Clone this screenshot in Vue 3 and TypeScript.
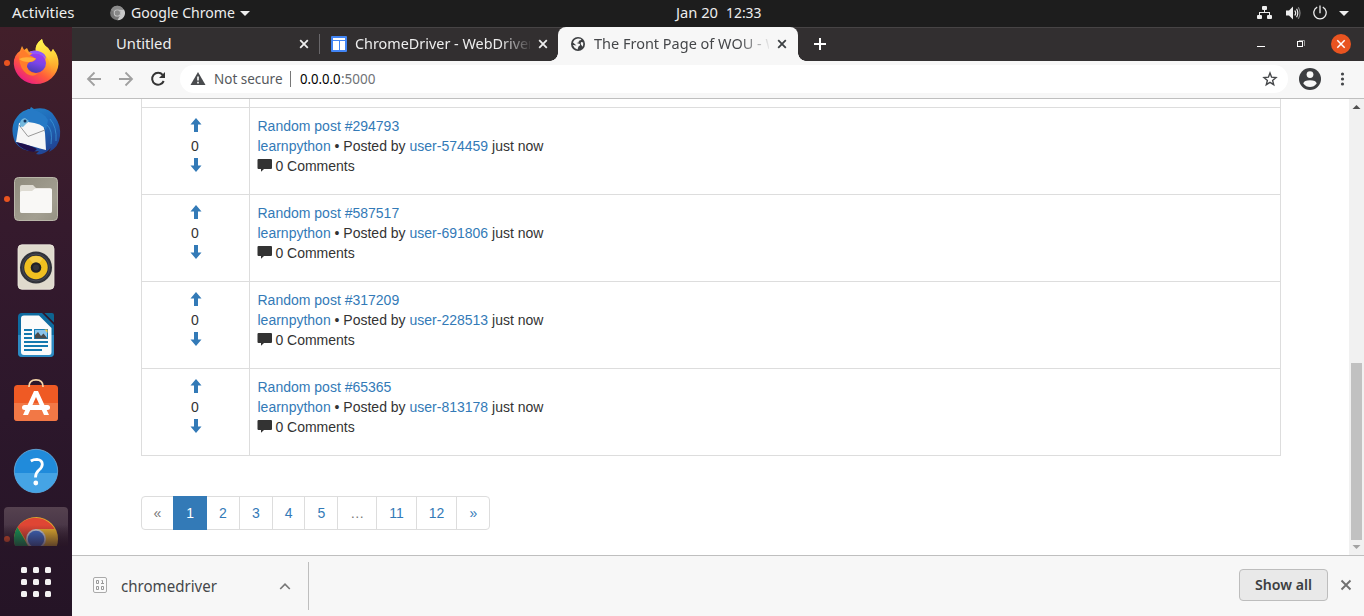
<script setup lang="ts">
import { h } from 'vue'

interface Post {
  title: string
  board: string
  author: string
}

interface LabelProps {
  text: string
  w: number
  h: number
  y: number
  size?: number
  color?: string
  weight?: number
}

// Single line of interface text, fitted to a fixed advance width.
const Label = (p: LabelProps) =>
  h('svg', { width: p.w + 1, height: p.h, style: { display: 'block', flex: 'none', overflow: 'visible' } }, [
    h(
      'text',
      {
        x: 0,
        y: p.y,
        textLength: p.w,
        lengthAdjust: 'spacingAndGlyphs',
        fill: p.color ?? '#eeeeee',
        'font-size': p.size ?? 14,
        'font-weight': p.weight ?? 400,
        'font-family': '"Noto Sans", "Open Sans", sans-serif',
        'xml:space': 'preserve',
      },
      p.text,
    ),
  ])
Label.props = ['text', 'w', 'h', 'y', 'size', 'color', 'weight']

const posts: Post[] = [
  { title: 'Random post #294793', board: 'learnpython', author: 'user-574459' },
  { title: 'Random post #587517', board: 'learnpython', author: 'user-691806' },
  { title: 'Random post #317209', board: 'learnpython', author: 'user-228513' },
  { title: 'Random post #65365', board: 'learnpython', author: 'user-813178' },
]

const pages = ['«', '1', '2', '3', '4', '5', '…', '11', '12', '»']
const gridDots = [0, 1, 2, 3, 4, 5, 6, 7, 8]
</script>

<template>
  <div class="screen">
    <header class="topbar">
      <Label class="activities" text="Activities" :w="62.5" :h="27" :y="18" />
      <svg class="app-icon" width="15" height="27" viewBox="0 0 15 27">
        <circle cx="7.3" cy="13" r="7.2" fill="#777" />
        <path d="M7.3 9.4H14A7.2 7.2 0 0 1 7.5 20.2L10.5 14.6A3.6 3.6 0 0 0 7.3 9.4Z" fill="#c9c9c9" />
        <path d="M1 9.7A7.2 7.2 0 0 1 13.6 9.4H7.3A3.7 3.7 0 0 0 3.8 12Z" fill="#8c8c8c" />
        <circle cx="7.3" cy="13" r="3.6" fill="#ccc" />
        <circle cx="7.3" cy="13" r="2.7" fill="#888" />
      </svg>
      <Label class="app-name" text="Google Chrome" :w="104" :h="27" :y="18" />
      <svg class="caret" width="10" height="27"><path d="M0 11H10L5 16Z" fill="#eee" /></svg>
      <div class="clock">
        <Label text="Jan 20" :w="42" :h="27" :y="18" />
        <Label text="12:33" :w="35.5" :h="27" :y="18" />
      </div>
      <div class="tray">
        <svg width="15" height="27" viewBox="0 0 15 27" fill="#eee">
          <rect x="5" y="6" width="5" height="4" rx="1" />
          <rect x="0" y="15" width="5" height="4" rx="1" />
          <rect x="10" y="15" width="5" height="4" rx="1" />
          <path d="M7 10H8V12H13V15H12V13H3V15H2V12H7Z" />
        </svg>
        <svg width="15" height="27" viewBox="0 0 15 27" fill="none" stroke="#eee" stroke-width="1.2">
          <path d="M0 10.5H3L7 6.5V19.5L3 15.5H0Z" fill="#eee" stroke="none" />
          <path d="M8.8 10.5Q10.6 13 8.8 15.5M10.6 8.7Q13 13 10.6 17.3" />
          <path d="M12.3 7.2Q15.7 13 12.3 18.8" stroke="#888" />
        </svg>
        <svg width="14" height="27" viewBox="0 0 14 27" fill="none" stroke="#eee" stroke-width="1.3">
          <path d="M7 5.5V13.2M4.2 7.2A6.2 6.2 0 1 0 9.8 7.2" />
        </svg>
        <svg width="10" height="27"><path d="M0 11H10L5 16Z" fill="#eee" /></svg>
      </div>
    </header>

    <div class="desktop">
      <nav class="dock">
        <svg class="slot" viewBox="0 0 72 68">
          <defs>
            <linearGradient id="ffBody" x1="0.85" y1="0.1" x2="0.25" y2="1">
              <stop offset="0" stop-color="#fff04a" />
              <stop offset="0.35" stop-color="#ffb02a" />
              <stop offset="0.65" stop-color="#ff5b3b" />
              <stop offset="1" stop-color="#e8168a" />
            </linearGradient>
            <linearGradient id="ffGlobe" x1="0.7" y1="0" x2="0.4" y2="1">
              <stop offset="0" stop-color="#a63af0" />
              <stop offset="0.5" stop-color="#7a45e8" />
              <stop offset="1" stop-color="#473bb0" />
            </linearGradient>
            <linearGradient id="ffTail" x1="0.4" y1="0" x2="0.6" y2="1">
              <stop offset="0" stop-color="#fff44f" />
              <stop offset="0.5" stop-color="#ffd23a" />
              <stop offset="1" stop-color="#ff8a2a" stop-opacity="0.2" />
            </linearGradient>
          </defs>
          <circle cx="7" cy="35" r="3" fill="#e95420" />
          <path d="M20 23L22 18L24 22L27 20L29 24Q33 22 36 23Q35 16 42 11Q43 17 48 20L51 24L53 21Q59 28 58.5 36A22.4 21.5 0 0 1 13.8 36Q13.5 27 20 23Z" fill="url(#ffBody)" />
          <path d="M35.5 23Q35 16 42 11Q43 17 48 20L51 25L53 21Q62 38 51 48Q52 33 44 26Z" fill="url(#ffTail)" />
          <circle cx="36" cy="35" r="10" fill="url(#ffGlobe)" />
          <path d="M19 30L22 20L29 27Q34 29 36 31Q34 34 30 34Q27 35 27 39Q29 46 38 45Q34 50 27 46Q20 41 19 30Z" fill="#ff7d2b" />
          <path d="M19 31Q24 28 36 30.5Q33 34 29 34Q22 34 19 31Z" fill="#ffb13a" />
          <path d="M29 24Q35 21 41 24Q46 26 46 31Q41 25 33 26Z" fill="#9059ff" />
        </svg>

        <svg class="slot" viewBox="0 0 72 68">
          <defs>
            <linearGradient id="tbBody" x1="0.2" y1="0" x2="0.8" y2="1">
              <stop offset="0" stop-color="#2484c8" />
              <stop offset="0.5" stop-color="#2068b8" />
              <stop offset="1" stop-color="#213e8e" />
            </linearGradient>
          </defs>
          <path d="M30 13L31 11L34 13Q49 10 55 21Q61 29 60 40Q59 51 49 56L51 52Q43 60 36 58L39 55Q22 57 15 46Q9 31 17 21Q22 14 30 13Z" fill="url(#tbBody)" />
          <path d="M16 46L19 27L28 24L43 28L45 37L46 54Q35 51 16 46Z" fill="#f6f6f6" />
          <path d="M19 29L28 40.5L45 34" fill="none" stroke="#999" stroke-width="1" />
          <path d="M16 46Q30 49 37 53L34 56Q21 54 16 46Z" fill="#20104c" />
          <path d="M28 13Q42 14 48 24L46 34Q42 27 28 26L20 31Q20 20 28 13Z" fill="#267ac6" />
          <path d="M20 28Q20 23 25 22L29 25L23 31L20 30Z" fill="#74b8dd" />
          <circle cx="25" cy="25" r="1.5" fill="#14345d" />
          <path d="M47 29Q53 34 51 48M50 23Q57 31 56 45" fill="none" stroke="#3e9ddc" stroke-width="1" opacity="0.7" />
        </svg>

        <svg class="slot" viewBox="0 0 72 68">
          <defs>
            <linearGradient id="files" x1="0" y1="0" x2="1" y2="1">
              <stop offset="0" stop-color="#8f8b7d" />
              <stop offset="0.7" stop-color="#a39f91" />
              <stop offset="1" stop-color="#969284" />
            </linearGradient>
          </defs>
          <circle cx="7" cy="35" r="3" fill="#e95420" />
          <rect x="14.5" y="13.5" width="43" height="43" rx="4" fill="url(#files)" stroke="#b9b6a9" />
          <path d="M20 25V23Q20 21 22 21H33L36 24H50Q52 24 52 26V47Q52 49 50 49H22Q20 49 20 47Z" fill="#dedbd2" />
          <path d="M20 28.5Q20 27 22 27H32L35 24.5H50Q52 24.5 52 26V47Q52 49 50 49H22Q20 49 20 47Z" fill="#f9f8f6" />
        </svg>

        <svg class="slot" viewBox="0 0 72 68">
          <rect x="18" y="12.8" width="36" height="44.5" rx="4" fill="#dfdacd" stroke="#eeeae0" stroke-width="0.8" />
          <circle cx="36" cy="35.5" r="16" fill="#303239" />
          <circle cx="36" cy="35.5" r="13.5" fill="none" stroke="#484b55" />
          <circle cx="36" cy="35.5" r="11.7" fill="#f0c020" />
          <path d="M36 35.5L29 26.5A11.5 11.5 0 0 1 43 26.5Z" fill="#f6cf4a" />
          <circle cx="36" cy="35.5" r="5.3" fill="#222226" />
          <circle cx="36" cy="35.5" r="3" fill="#35353a" />
        </svg>

        <svg class="slot" viewBox="0 0 72 68">
          <path d="M22 13H42L54 25V53Q54 57 50 57H22Q18 57 18 53V17Q18 13 22 13Z" fill="#0e6ba0" />
          <path d="M18 35H54V53Q54 57 50 57H22Q18 57 18 53Z" fill="#2d8ac2" />
          <path d="M44.5 13H52Q54 13 54 15V22.5Z" fill="#0e6390" />
          <path d="M24 15.5H39L51.5 28V52Q51.5 55 49 55H24Q21 55 21 52V18.5Q21 15.5 24 15.5Z" fill="#fbfbfb" />
          <path d="M24 30H32M24 34H32M24 38H32M24 42H48M24 46H48M24 50H42" stroke="#1478ae" stroke-width="2" />
          <rect x="34.5" y="29.5" width="13" height="9" fill="#8ac4eb" stroke="#167db5" />
          <path d="M35 38.5V35L38 32L41 36L43.5 33.5L47.5 38.5Z" fill="#4a4a4a" />
          <path d="M44.5 29.5H47.5V33Z" fill="#ffc83d" />
        </svg>

        <svg class="slot" viewBox="0 0 72 68">
          <rect x="14" y="17" width="44" height="36" rx="3.5" fill="#ef5a24" />
          <path d="M14 35H58V49.5Q58 53 54.5 53H17.5Q14 53 14 49.5Z" fill="#f27846" />
          <path d="M29 19V18.5Q29 11.8 36 11.8T43 18.5V19" fill="none" stroke="#f6d5a8" stroke-width="1.7" />
          <path d="M34 23H38L49 47H44L36 29L28 47H23Z" fill="#fff" />
          <rect x="22" y="37" width="28" height="5" rx="2.5" fill="#fff" />
        </svg>

        <svg class="slot" viewBox="0 0 72 68">
          <circle cx="36" cy="35" r="21.7" fill="#208bdb" stroke="#79bce9" stroke-width="0.7" />
          <path d="M14.5 37H57.5A21.6 21.6 0 0 1 14.5 37Z" fill="#45a4e5" />
          <path d="M30.8 25Q33.5 23.3 37 23.3Q42.3 23.8 42.3 28.3Q42.3 31.3 39 34Q35.5 37 35.5 41.5" fill="none" stroke="#fff" stroke-width="2.8" />
          <circle cx="35.8" cy="47" r="2.4" fill="#fff" />
        </svg>

        <div class="slot-clip">
          <svg class="slot" viewBox="0 0 72 68">
            <defs>
              <linearGradient id="focus" x1="0" y1="0" x2="0" y2="1">
                <stop offset="0" stop-color="#55414f" />
                <stop offset="0.45" stop-color="#4b3848" />
                <stop offset="1" stop-color="#291727" />
              </linearGradient>
              <linearGradient id="shade" x1="0" y1="0" x2="0" y2="1">
                <stop offset="0" stop-color="#281526" stop-opacity="0" />
                <stop offset="1" stop-color="#281526" stop-opacity="0.7" />
              </linearGradient>
            </defs>
            <path d="M4 42V7Q4 3 8 3H64Q68 3 68 7V42Z" fill="url(#focus)" />
            <circle cx="7" cy="35" r="3" fill="#d94e27" />
            <circle cx="36" cy="35" r="22" fill="#e1ac2d" />
            <path d="M17.5 23L28 42L36 57A22 22 0 0 1 17.5 23Z" fill="#159653" />
            <path d="M17.5 23A22 22 0 0 1 54.5 25H36L26.5 37Z" fill="#df4634" />
            <circle cx="36" cy="35" r="10" fill="#c6c7d0" />
            <circle cx="36" cy="35" r="8.3" fill="#3e68be" />
            <rect x="4" y="21" width="64" height="21" fill="url(#shade)" />
          </svg>
        </div>
        <div class="app-grid">
          <span v-for="d in gridDots" :key="d"></span>
        </div>
      </nav>

      <main class="browser">
        <div class="tabstrip">
          <div class="tab tab-first">
            <Label text="Untitled" :w="55.5" :h="34" :y="22" />
            <svg class="tab-close" width="10" height="34" viewBox="0 0 10 34"><path d="M1.2 13.2L8.8 20.8M8.8 13.2L1.2 20.8" stroke="#eee" stroke-width="1.8" /></svg>
          </div>
          <div class="tab tab-second">
            <svg width="16" height="34" viewBox="0 0 16 34"><rect y="9" width="16" height="16" rx="1" fill="#4285f4" /><path d="M2 11H14V13H2ZM2 14H8V23H2ZM9 14H14V23H9Z" fill="#fff" /></svg>
            <div class="tab-title">
              <Label text="ChromeDriver - WebDriver" :w="179" :h="34" :y="22" />
            </div>
            <svg class="tab-close" width="10" height="34" viewBox="0 0 10 34"><path d="M1.2 13.2L8.8 20.8M8.8 13.2L1.2 20.8" stroke="#eee" stroke-width="1.8" /></svg>
          </div>
          <div class="tab tab-active">
            <svg width="14" height="34" viewBox="0 0 14 34"><circle cx="7" cy="17" r="7" fill="#3c3e41" /><path d="M7 11.5L10.5 12Q9.8 13.5 8 13.7L7.5 15.5L5.5 16L9 17Q9.5 18.5 7.5 19.5L6.5 22.5Q3 21.5 1.8 18L5.5 18.5L2 15.5Q3 12 7 11.5ZM10 15L12.2 15.5Q12.5 18 11.5 19.8L9.7 17Z" fill="#f7f7f7" /></svg>
            <div class="tab-title">
              <Label text="The Front Page of WOU - W" :w="185" :h="34" :y="22" color="#45474a" />
            </div>
            <svg class="tab-close" width="10" height="34" viewBox="0 0 10 34"><path d="M1.2 13.2L8.8 20.8M8.8 13.2L1.2 20.8" stroke="#3c4043" stroke-width="1.8" /></svg>
          </div>
          <svg class="new-tab" width="12" height="34"><path d="M6 11V23M0 17H12" stroke="#fff" stroke-width="2" /></svg>
          <div class="window-buttons">
            <svg width="8" height="34"><path d="M0 19.5H8" stroke="#fff" /></svg>
            <svg width="8" height="34" viewBox="0 0 8 34" fill="none"><path d="M2 13.5H7.5V19" stroke="#999" /><rect x="0.5" y="14.5" width="5" height="5" stroke="#fff" /></svg>
            <svg width="20" height="34" viewBox="0 0 20 34"><circle cx="10" cy="17" r="10" fill="#e95420" /><path d="M6.3 13.3L13.7 20.7M13.7 13.3L6.3 20.7" stroke="#fff" stroke-width="1.5" /></svg>
          </div>
        </div>

        <div class="toolbar">
          <div class="nav-icons">
            <svg width="16" height="16" viewBox="0 0 16 16" fill="none" stroke="#a0a0a0" stroke-width="1.8"><path d="M15 8H2M8.5 1.5L2 8L8.5 14.5" /></svg>
            <svg width="16" height="16" viewBox="0 0 16 16" fill="none" stroke="#a0a0a0" stroke-width="1.8"><path d="M1 8H14M7.5 1.5L14 8L7.5 14.5" /></svg>
            <svg width="16" height="16" viewBox="0 0 16 16"><path d="M12.7 3.8A6 6 0 1 0 13.7 10" fill="none" stroke="#333" stroke-width="2" /><path d="M15 1V7H9Z" fill="#333" /></svg>
          </div>
          <div class="omnibox">
            <svg class="warning" width="16" height="28" viewBox="0 0 16 28"><path d="M8 7L15.5 20H0.5Z" fill="#494b4e" /><path d="M8 11.5V15.5M8 16.7V18.5" stroke="#fff" stroke-width="1.6" /></svg>
            <Label text="Not secure" :w="68.5" :h="28" :y="18.5" color="#55585c" />
            <i class="omni-line"></i>
            <Label text="0.0.0.0" :w="40.5" :h="28" :y="18.5" color="#000" />
            <Label text=":5000" :w="34.5" :h="28" :y="18.5" color="#6f7276" />
            <svg class="star" width="16" height="28" viewBox="0 0 16 28"><path d="M8 8L9.6 12.2L14 12.5L10.6 15.4L11.7 19.7L8 17.3L4.3 19.7L5.4 15.4L2 12.5L6.4 12.2Z" fill="none" stroke="#45474a" stroke-width="1.4" /></svg>
          </div>
          <svg class="profile" width="22" height="22" viewBox="0 0 22 22"><circle cx="11" cy="11" r="11" fill="#3c3e41" /><circle cx="11" cy="6.6" r="3.4" fill="#f7f7f7" /><path d="M4.3 15.5Q5 12.3 11 12.3T17.7 15.5Q15 19 11 19T4.3 15.5Z" fill="#f7f7f7" /></svg>
          <svg class="menu" width="4" height="16" viewBox="0 0 4 16" fill="#45474a"><circle cx="2.5" cy="3" r="1.6" /><circle cx="2.5" cy="8" r="1.6" /><circle cx="2.5" cy="13" r="1.6" /></svg>
        </div>

        <div class="viewport">
          <div class="page">
            <div class="posts">
              <div class="post post-cut">
                <div class="votes"></div>
                <div class="details"></div>
              </div>
              <div v-for="p in posts" :key="p.title" class="post">
                <div class="votes">
                  <svg class="arrow" width="12" height="20" viewBox="0 0 12 20"><path d="M6 2L11.5 8.5H8V16H4V8.5H0.5Z" /></svg>
                  <span>0</span>
                  <svg class="arrow" width="12" height="20" viewBox="0 0 12 20"><path d="M6 16L11.5 9.5H8V2H4V9.5H0.5Z" /></svg>
                </div>
                <div class="details">
                  <a>{{ p.title }}</a><br />
                  <a>{{ p.board }}</a> • Posted by <a>{{ p.author }}</a> just now<br />
                  <svg class="comment" width="14" height="13" viewBox="0 0 14 13"><path d="M0.5 0H13Q14 0 14 1V9Q14 10 13 10H6L3 12.8V10H0.5Q-0.5 10 -0.5 9V1Q-0.5 0 0.5 0Z" /></svg> 0 Comments
                </div>
              </div>
            </div>
            <ul class="pagination">
              <li v-for="p in pages" :key="p" :class="{ active: p === '1', muted: p === '«' || p === '…' }">{{ p }}</li>
            </ul>
          </div>
          <div class="scrollbar">
            <svg width="15" height="15"><path d="M3.5 10L7.5 6L11.5 10Z" fill="#505050" /></svg>
            <div class="thumb"></div>
            <svg width="15" height="15"><path d="M3.5 5L7.5 9L11.5 5Z" fill="#a3a3a3" /></svg>
          </div>
        </div>

        <footer class="downloads">
          <svg class="file-icon" width="14" height="16" viewBox="0 0 14 16" fill="none" stroke="#aaa"><rect x="0.5" y="0.5" width="13" height="15" rx="1.5" fill="#fafafa" /><path d="M3.5 3.5H5.5V6.5H3.5ZM8.5 3.5H9.5V6.5M8 6.5H11M3.5 9.5H5.5V12.5H3.5ZM8.5 9.5H10.5V12.5H8.5Z" stroke="#999" /></svg>
          <Label text="chromedriver" :w="96" :h="60" :y="36" :size="16" color="#45474a" />
          <svg class="chevron" width="12" height="60"><path d="M1.2 33L6 28.2L10.8 33" fill="none" stroke="#777" stroke-width="1.7" /></svg>
          <i class="dl-line"></i>
          <div class="show-all">
            <Label text="Show all" :w="57" :h="30" :y="20" :size="14" :weight="600" color="#3c3e41" />
          </div>
          <svg class="dl-close" width="12" height="60"><path d="M1.5 24.5L10.5 33.5M10.5 24.5L1.5 33.5" stroke="#717171" stroke-width="1.9" /></svg>
        </footer>
      </main>
    </div>
  </div>
</template>

<style>
body {
  margin: 0;
  overflow: hidden;
}
</style>

<style scoped>
.screen {
  width: 1364px;
  height: 616px;
  display: flex;
  flex-direction: column;
  overflow: hidden;
  background: #fff;
}
svg {
  display: block;
  flex: none;
}
.topbar {
  height: 27px;
  flex: none;
  display: flex;
  background: #1d1d1d;
}
.activities {
  margin-left: 12px;
}
.app-icon {
  margin-left: 34px;
}
.app-name {
  margin-left: 6.5px;
}
.caret {
  margin-left: 4px;
}
.clock {
  display: flex;
  gap: 6.5px;
  margin-left: 426px;
}
.tray {
  display: flex;
  margin-left: auto;
  margin-right: 15px;
  gap: 12.6px;
}
.tray svg:nth-child(2) {
  margin-left: 1px;
}
.tray svg:nth-child(3) {
  margin-right: -1px;
}
.desktop {
  flex: 1;
  min-height: 0;
  display: flex;
}
.dock {
  width: 72px;
  flex: none;
  box-sizing: border-box;
  padding-top: 1px;
  background: linear-gradient(#421f2a, #351a2d 34%, #2c172b 66%, #251426);
}
.slot {
  width: 72px;
  height: 68px;
}
.slot-clip {
  height: 42px;
  overflow: hidden;
}
.app-grid {
  display: grid;
  grid-template-columns: repeat(3, 6px);
  gap: 6px;
  margin: 21px 0 0 21px;
}
.app-grid span {
  height: 6px;
  border-radius: 1.5px;
  background: #f3f1f2;
}
.browser {
  flex: 1;
  min-width: 0;
  display: flex;
  flex-direction: column;
}
.tabstrip {
  height: 34px;
  flex: none;
  display: flex;
  background: #322f30;
  box-shadow: inset 0 1px #474445;
}
.tab {
  display: flex;
  box-sizing: border-box;
}
.tab-close {
  margin-left: auto;
}
.tab-title {
  width: 175px;
  margin-left: 8px;
  overflow: hidden;
  mask-image: linear-gradient(90deg, #000 145px, transparent 178px);
}
.tab-first {
  width: 248px;
  padding: 0 11px 0 44px;
  background: linear-gradient(#69676a, #69676a) right 7px / 1px 20px no-repeat;
}
.tab-second {
  width: 238px;
  padding: 0 10px 0 11px;
}
.tab-active {
  position: relative;
  width: 240px;
  padding: 0 11px 0 13px;
  border-radius: 8px 8px 0 0;
  background: #f7f7f7;
}
.tab-active .tab-title {
  margin-left: 9px;
}
.tab-active::before,
.tab-active::after {
  content: '';
  position: absolute;
  bottom: 0;
  width: 8px;
  height: 8px;
}
.tab-active::before {
  left: -8px;
  background: radial-gradient(circle at 0 0, transparent 7.5px, #f7f7f7 8px);
}
.tab-active::after {
  right: -8px;
  background: radial-gradient(circle at 100% 0, transparent 7.5px, #f7f7f7 8px);
}
.new-tab {
  margin-left: 16px;
}
.window-buttons {
  display: flex;
  margin-left: auto;
  margin-right: 13px;
}
.window-buttons svg + svg {
  margin-left: 32px;
}
.window-buttons svg + svg + svg {
  margin-left: 26px;
}
.toolbar {
  height: 37px;
  flex: none;
  display: flex;
  align-items: center;
  background: #f7f7f7;
  border-bottom: 1px solid #bfbfbf;
}
.nav-icons {
  display: flex;
  gap: 16px;
  margin: -1px 0 0 14px;
}
.omnibox {
  display: flex;
  box-sizing: border-box;
  width: 1108px;
  height: 28px;
  margin: -1px 0 0 14px;
  padding: 0 10px;
  border-radius: 14px;
  background: #fff;
}
.warning {
  margin-right: 8px;
}
.omni-line {
  width: 1px;
  height: 16px;
  margin: 6px 9px 0 6px;
  background: #777;
}
.star {
  margin-left: auto;
}
.profile {
  margin: -1px 0 0 11px;
}
.menu {
  margin: -1px 0 0 19px;
  overflow: visible;
}
.viewport {
  flex: 1;
  min-height: 0;
  display: flex;
}
.page {
  flex: 1;
  padding-left: 68.5px;
  font: 14px/20px 'Liberation Sans', Arial, sans-serif;
  color: #333;
}
.posts {
  width: 1140px;
  box-sizing: border-box;
  border: 1px solid #ddd;
  border-top: 0;
}
.post {
  display: flex;
  box-sizing: border-box;
  height: 87px;
  border-top: 1px solid #ddd;
}
.post-cut {
  height: 8px;
  border-top: 0;
}
.votes {
  width: 107px;
  display: flex;
  flex-direction: column;
  align-items: center;
}
.post:not(.post-cut) .votes,
.post:not(.post-cut) .details {
  padding-top: 8px;
}
.arrow {
  margin-left: 1.4px;
  fill: #337ab7;
}
.details {
  flex: 1;
  padding-left: 8px;
  border-left: 1px solid #ddd;
}
.details a {
  color: #337ab7;
}
.comment {
  display: inline-block;
  vertical-align: -1px;
  overflow: visible;
  fill: #333;
}
.pagination {
  display: flex;
  list-style: none;
  margin: 40px 0 0;
  padding: 0;
}
.pagination li {
  padding: 6px 12px;
  margin-left: -1px;
  border: 1px solid #ddd;
  color: #337ab7;
}
.pagination li:first-child {
  margin-left: 0;
  border-radius: 4px 0 0 4px;
}
.pagination li:last-child {
  border-radius: 0 4px 4px 0;
}
.pagination .muted {
  color: #777;
}
.pagination .active {
  position: relative;
  color: #fff;
  background: #337ab7;
  border-color: #337ab7;
}
.scrollbar {
  width: 15px;
  display: flex;
  flex-direction: column;
  background: #f1f1f1;
}
.thumb {
  width: 11px;
  height: 177px;
  margin: auto 0 0 2px;
  background: #c1c1c1;
}
.downloads {
  height: 60px;
  flex: none;
  display: flex;
  background: #f7f7f7;
  border-top: 1px solid #bfbfbf;
}
.file-icon {
  margin: 21px 13.5px 0 21px;
}
.chevron {
  margin-left: 61.5px;
}
.dl-line {
  width: 1px;
  height: 48px;
  margin: 6px 0 0 17px;
  background: #bebebe;
}
.show-all {
  box-sizing: border-box;
  width: 89px;
  height: 32px;
  margin: 13px 0 0 auto;
  padding-left: 15px;
  border: 1px solid #bdbdbd;
  border-radius: 4px;
  background: #e9e9e9;
}
.dl-close {
  margin: 0 12px;
}
</style>
